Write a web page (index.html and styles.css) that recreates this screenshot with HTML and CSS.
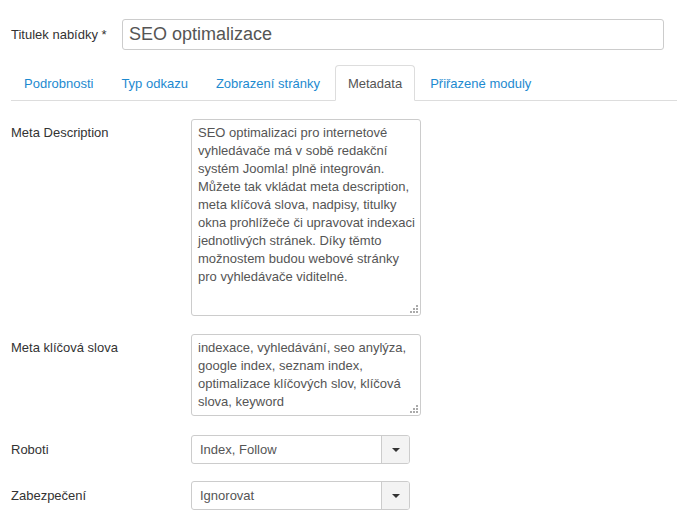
FILE: index.html
```html
<!DOCTYPE html>
<html lang="cs">
<head>
<meta charset="utf-8">
<title>Metadata</title>
<link rel="stylesheet" href="styles.css">
</head>
<body>
<div class="page">
  <div class="title-row">
    <label class="title-label" for="title">Titulek nabídky *</label>
    <input class="title-input" id="title" type="text" value="SEO optimalizace">
  </div>

  <ul class="tabs">
    <li class="tab"><a href="#">Podrobnosti</a></li>
    <li class="tab"><a href="#">Typ odkazu</a></li>
    <li class="tab"><a href="#">Zobrazení stránky</a></li>
    <li class="tab active"><a href="#">Metadata</a></li>
    <li class="tab"><a href="#">Přiřazené moduly</a></li>
  </ul>

  <div class="group">
    <label class="field-label" for="desc">Meta Description</label>
    <div class="control area-wrap">
      <textarea class="area area-desc" id="desc" wrap="off">SEO optimalizaci pro internetové
vyhledávače má v sobě redakční
systém Joomla! plně integrován.
Můžete tak vkládat meta description,
meta klíčová slova, nadpisy, titulky
okna prohlížeče či upravovat indexaci
jednotlivých stránek. Díky těmto
možnostem budou webové stránky
pro vyhledávače viditelné.</textarea>
      <svg class="grip" width="9" height="9" viewBox="0 0 9 9"><rect x="7" y="1" width="2" height="2"/><rect x="4" y="4" width="2" height="2"/><rect x="7" y="4" width="2" height="2"/><rect x="1" y="7" width="2" height="2"/><rect x="4" y="7" width="2" height="2"/><rect x="7" y="7" width="2" height="2"/></svg>
    </div>
  </div>

  <div class="group">
    <label class="field-label" for="keys">Meta klíčová slova</label>
    <div class="control area-wrap">
      <textarea class="area area-keys" id="keys" wrap="off">indexace, vyhledávání, seo anylýza,
google index, seznam index,
optimalizace klíčových slov, klíčová
slova, keyword</textarea>
      <svg class="grip" width="9" height="9" viewBox="0 0 9 9"><rect x="7" y="1" width="2" height="2"/><rect x="4" y="4" width="2" height="2"/><rect x="7" y="4" width="2" height="2"/><rect x="1" y="7" width="2" height="2"/><rect x="4" y="7" width="2" height="2"/><rect x="7" y="7" width="2" height="2"/></svg>
    </div>
  </div>

  <div class="group center">
    <span class="field-label">Roboti</span>
    <div class="select">
      <span class="select-value">Index, Follow</span>
      <span class="select-btn"><span class="caret"></span></span>
    </div>
  </div>

  <div class="group center">
    <span class="field-label">Zabezpečení</span>
    <div class="select">
      <span class="select-value">Ignorovat</span>
      <span class="select-btn"><span class="caret"></span></span>
    </div>
  </div>
</div>
</body>
</html>
```

FILE: styles.css
```css
* { box-sizing: border-box; }

html, body {
  margin: 0;
  background: #fff;
}

body {
  font-family: "Liberation Sans", Arial, sans-serif;
  font-size: 13px;
  line-height: 18px;
  color: #333;
}

.page {
  padding: 19px 13px 0 11px;
}

.title-row {
  display: flex;
  align-items: center;
}

.title-label {
  width: 111px;
  color: #333;
}

.title-input {
  flex: 1;
  height: 31px;
  border: 1px solid #ccc;
  border-radius: 3px;
  padding: 0 6px;
  font-family: "Liberation Sans", Arial, sans-serif;
  font-size: 18px;
  color: #555;
  background: #fff;
  outline: none;
}

.tabs {
  list-style: none;
  margin: 15px -13px 18px 0;
  padding: 0;
  display: flex;
  border-bottom: 1px solid #ddd;
}

.tab {
  margin-bottom: -1px;
}

.tab a {
  display: block;
  padding: 9px 12px 7px;
  line-height: 18px;
  margin-right: 2px;
  border: 1px solid transparent;
  border-radius: 4px 4px 0 0;
  color: #1d8ad0;
  text-decoration: none;
}

.tab.active a {
  color: #555;
  background: #fff;
  border-color: #ddd #ddd transparent;
}

.group {
  display: flex;
  align-items: flex-start;
  margin-bottom: 18px;
}

.group.center {
  align-items: center;
  padding-top: 1px;
  margin-bottom: 16px;
}

.field-label {
  width: 180px;
  padding-top: 5px;
  color: #333;
}

.group.center .field-label {
  padding-top: 0;
}

.area-wrap {
  position: relative;
}

.area {
  display: block;
  width: 230px;
  padding: 4px 6px;
  border: 1px solid #ccc;
  border-radius: 3px;
  font-family: "Liberation Sans", Arial, sans-serif;
  font-size: 13px;
  line-height: 18px;
  color: #555;
  resize: none;
  overflow: hidden;
  outline: none;
  white-space: pre;
}

.area-desc { height: 197px; }
.area-keys { height: 82px; }

.grip {
  position: absolute;
  right: 3px;
  bottom: 3px;
  fill: #aaa;
}

.select {
  display: flex;
  width: 219px;
  height: 29px;
  border: 1px solid #ccc;
  border-radius: 3px;
  overflow: hidden;
}

.select-value {
  flex: 1;
  padding-left: 8px;
  line-height: 27px;
  color: #555;
}

.select-btn {
  width: 28px;
  border-left: 1px solid #ccc;
  background: #f3f3f3;
  display: flex;
  align-items: center;
  justify-content: center;
}

.caret {
  width: 0;
  height: 0;
  border-left: 4px solid transparent;
  border-right: 4px solid transparent;
  border-top: 4px solid #333;
}
```
